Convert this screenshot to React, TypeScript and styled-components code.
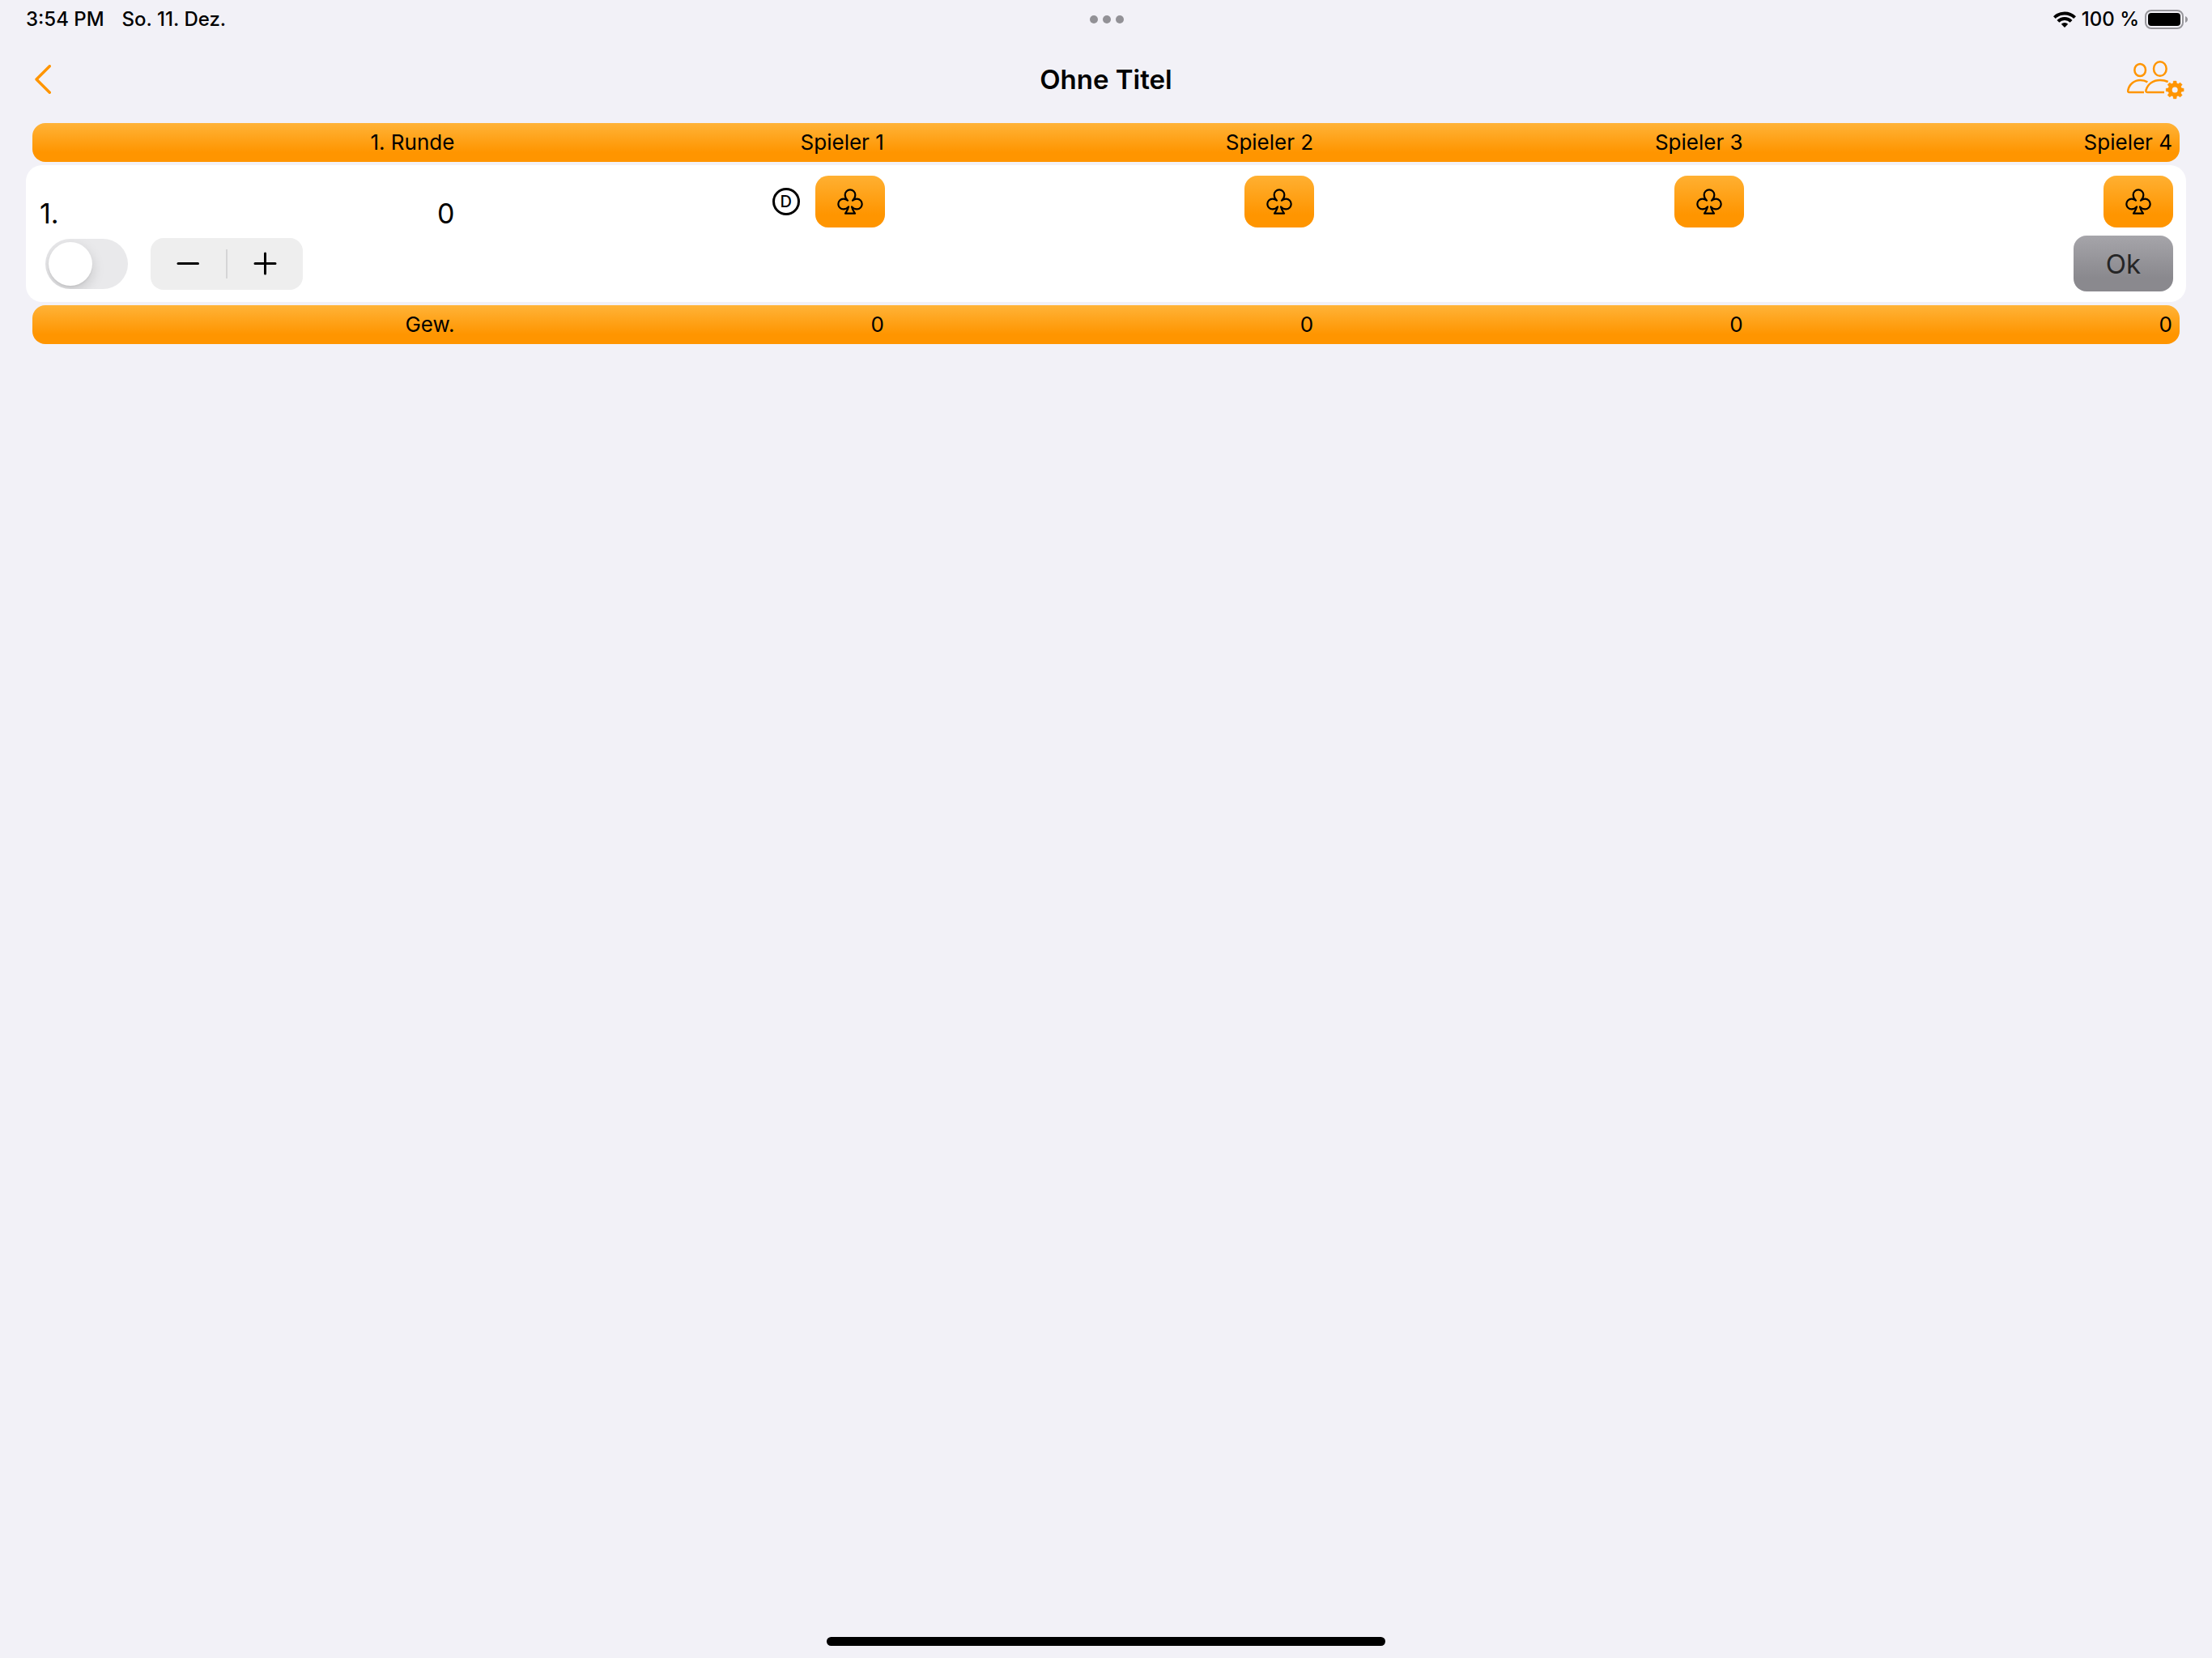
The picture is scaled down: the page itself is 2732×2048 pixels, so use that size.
import React, { useState } from "react";
import styled, { createGlobalStyle } from "styled-components";

const orange = "#ff9500";

const GlobalStyle = createGlobalStyle`
  *, *::before, *::after { box-sizing: border-box; }
  body {
    margin: 0;
    background: #f2f1f7;
    color: #000;
    font-family: Inter, "Liberation Sans", sans-serif;
  }
  button, input { font: inherit; color: inherit; margin: 0; padding: 0; border: 0; }
  svg { display: block; }
`;

const Page = styled.div`
  min-height: 100vh;
  display: flex;
  flex-direction: column;
`;

const StatusBar = styled.div`
  height: 48px;
  padding: 0 30px 0 32px;
  display: grid;
  grid-template-columns: 1fr auto 1fr;
  align-items: center;
  font-size: 24px;
  line-height: 28px;
  font-weight: 500;
`;

const StatusGroup = styled.div<{ $end?: boolean; $gap: number }>`
  display: flex;
  align-items: center;
  justify-content: ${(p) => (p.$end ? "flex-end" : "flex-start")};
  gap: ${(p) => p.$gap}px;
`;

const Dots = styled.button`
  display: flex;
  gap: 6px;
  background: none;
`;

const Dot = styled.span`
  width: 10px;
  height: 10px;
  border-radius: 50%;
  background: #929196;
`;

const NavBar = styled.header`
  height: 100px;
  padding: 0 32px;
  display: grid;
  grid-template-columns: 1fr auto 1fr;
  align-items: center;
`;

const Title = styled.h1`
  margin: 0;
  font-size: 33px;
  line-height: 40px;
  font-weight: 600;
`;

const NavButton = styled.button<{ $end?: boolean }>`
  justify-self: ${(p) => (p.$end ? "end" : "start")};
  padding: ${(p) => (p.$end ? "0 2px" : "0 11px")};
  background: none;
  color: ${orange};
`;

const ScoreTable = styled.table`
  display: flex;
  flex-direction: column;
  gap: 4px;
  margin: 4px 32px 0;
`;

const Head = styled.thead`
  display: block;
`;

const Foot = styled.tfoot`
  display: block;
`;

const Round = styled.tbody`
  display: flex;
  flex-direction: column;
  gap: 10px;
  padding: 13px 8px;
  border-radius: 20px;
  background: #fff;
`;

const Row = styled.tr`
  display: grid;
  grid-template-columns: repeat(5, 1fr);
`;

const BarRow = styled(Row)`
  height: 48px;
  margin: 0 8px;
  align-items: center;
  border-radius: 16px;
  background: linear-gradient(#ffb338, ${orange} 75%);
`;

const BarCell = styled.th`
  padding: 0 9px;
  font-size: 26px;
  line-height: 32px;
  font-weight: 400;
  text-align: right;
`;

const BarValue = styled(BarCell).attrs({ as: "td" })``;

const BidCell = styled.td`
  padding: 0 8px;
  display: flex;
  align-items: center;
  justify-content: flex-end;
  gap: 19px;
`;

const SumCell = styled(BidCell)`
  padding: 0 9px;
  align-items: flex-end;
  justify-content: space-between;
  font-size: 34px;
  line-height: 34px;
`;

const Dealer = styled.span`
  width: 34px;
  height: 34px;
  display: grid;
  place-items: center;
  border: 3px solid #000;
  border-radius: 50%;
  font-size: 20px;
  line-height: 20px;
  font-weight: 500;
`;

const SuitButton = styled.button`
  width: 86px;
  height: 64px;
  display: grid;
  place-items: center;
  border-radius: 16px;
  background: linear-gradient(#ffb032, ${orange} 75%);
`;

const ControlCell = styled.td`
  grid-column: 1 / -1;
  padding: 0 8px 0 16px;
  display: flex;
  align-items: center;
  gap: 28px;
`;

const Switch = styled.input`
  appearance: none;
  width: 102px;
  height: 62px;
  padding: 4px;
  border-radius: 31px;
  overflow: hidden;
  background: #e9e9eb;

  &::before {
    content: "";
    display: block;
    width: 54px;
    height: 54px;
    border-radius: 50%;
    background: #fff;
    box-shadow: 0 6px 16px rgba(0, 0, 0, 0.15), 0 2px 2px rgba(0, 0, 0, 0.05);
  }

  &:checked { background: #34c759; }
  &:checked::before { margin-left: 40px; }
`;

const Stepper = styled.div`
  width: 188px;
  height: 64px;
  display: flex;
  align-items: center;
  border-radius: 16px;
  background: #eee;
`;

const StepButton = styled.button`
  flex: 1;
  height: 64px;
  display: grid;
  place-items: center;
  background: none;
`;

const StepDivider = styled.span`
  width: 2px;
  height: 36px;
  background: #d5d5d6;
`;

const OkButton = styled.button`
  width: 123px;
  height: 69px;
  margin-left: auto;
  border-radius: 16px;
  background: linear-gradient(#a6a5aa, #8a898e 75%);
  color: #252526;
  font-size: 33px;
  line-height: 40px;
`;

const HomeIndicator = styled.div`
  width: 690px;
  max-width: 60%;
  height: 11px;
  margin: auto auto 15px;
  border-radius: 6px;
  background: #000;
`;

const ChevronIcon = () => (
  <svg width="20" height="36" viewBox="0 0 20 36" fill="none" stroke="currentColor" strokeWidth="3.400" strokeLinecap="round" strokeLinejoin="round">
    <path d="M18.300 1.700 2 18l16.300 16.300" />
  </svg>
);

const WifiIcon = () => (
  <svg width="28" height="20" viewBox="0 0 28 20" fill="none" stroke="#000" strokeWidth="4">
    <path d="M1.400 7.600a18 18 0 0 1 25.200 0" />
    <path d="M5.900 12.400a11.500 11.500 0 0 1 16.200 0" />
    <path d="M14 20l-4.200-4.200a6 6 0 0 1 8.400 0z" fill="#000" stroke="none" />
  </svg>
);

const BatteryIcon = () => (
  <svg width="53" height="24" viewBox="0 0 53 24">
    <rect x="1" y="1" width="46" height="22" rx="7" fill="none" stroke="#97969b" strokeWidth="2" />
    <rect x="4" y="4" width="40" height="16" rx="4" />
    <path d="M50 8c4 1.500 4 6.500 0 8z" fill="#97969b" />
  </svg>
);

const gearTeeth = [0, 45, 90, 135, 180, 225, 270, 315];

const PlayersIcon = () => (
  <svg width="72" height="49" viewBox="378 222 216 147" fill="none" stroke="currentColor" strokeWidth="7.500" strokeLinecap="butt" strokeLinejoin="round">
    <ellipse cx="429.500" cy="259.500" rx="20.500" ry="22.500" />
    <ellipse cx="503.500" cy="255" rx="23.500" ry="26.500" />
    <path d="M444 342h-54c-5 0-6-2-5-8 4-21 23-37 45-37 10 0 19 2 27 7" />
    <path d="M519 342h-62c-6 0-7-3-5-9 6-22 26-36 52-36 11 0 20 2 29 6" />
    <circle cx="558.500" cy="333" r="18" strokeWidth="15" />
    {gearTeeth.map((angle) => (
      <path key={angle} d="M551 312l2-12h11l2 12z" transform={`rotate(${angle} 558.5 333)`} fill="currentColor" strokeWidth="1" />
    ))}
  </svg>
);

const ClubIcon = () => (
  <svg width="32" height="32" viewBox="375 130 96 96" fill="none" stroke="#000" strokeWidth="6.500" strokeLinejoin="round">
    <path d="M414 174C407 167 404 160 404 153A19 19 0 0 1 442 153C442 160 439 167 432 174C437 170 442 168 448 168A19 19 0 0 1 448 206C440 206 434 203 429 197C431 208 436 214 441 222H405C410 214 415 208 417 197C412 203 406 206 398 206A19 19 0 0 1 398 168C404 168 409 170 414 174Z" />
  </svg>
);

const MinusIcon = () => (
  <svg width="30" height="30" viewBox="0 0 30 30" stroke="#000" strokeWidth="3" strokeLinecap="round">
    <path d="M2 14.500h24.500" />
  </svg>
);

const PlusIcon = () => (
  <svg width="30" height="30" viewBox="0 0 30 30" stroke="#000" strokeWidth="3" strokeLinecap="round">
    <path d="M2 14.500h25M14.500 2v25" />
  </svg>
);

const players = ["Spieler 1", "Spieler 2", "Spieler 3", "Spieler 4"];

export default function App() {
  const [total, setTotal] = useState(0);

  return (
    <>
      <GlobalStyle />
      <Page>
        <StatusBar>
          <StatusGroup $gap={22}>
            <span>3:54 PM</span>
            <span>So. 11. Dez.</span>
          </StatusGroup>
          <Dots aria-label="Multitasking">
            <Dot />
            <Dot />
            <Dot />
          </Dots>
          <StatusGroup $end $gap={7}>
            <WifiIcon />
            <span>100 %</span>
            <BatteryIcon />
          </StatusGroup>
        </StatusBar>
        <NavBar>
          <NavButton aria-label="Zurück">
            <ChevronIcon />
          </NavButton>
          <Title>Ohne Titel</Title>
          <NavButton $end aria-label="Spieler verwalten">
            <PlayersIcon />
          </NavButton>
        </NavBar>
        <ScoreTable>
          <Head>
            <BarRow>
              <BarCell scope="col">1. Runde</BarCell>
              {players.map((name) => (
                <BarCell key={name} scope="col">{name}</BarCell>
              ))}
            </BarRow>
          </Head>
          <Round>
            <Row>
              <SumCell>
                <span>1.</span>
                <span>{total}</span>
              </SumCell>
              {players.map((name, index) => (
                <BidCell key={name}>
                  {index === 0 && <Dealer>D</Dealer>}
                  <SuitButton aria-label={`Ansage ${name}`}>
                    <ClubIcon />
                  </SuitButton>
                </BidCell>
              ))}
            </Row>
            <Row>
              <ControlCell>
                <Switch type="checkbox" role="switch" aria-label="Runde werten" />
                <Stepper role="group" aria-label="Punkte">
                  <StepButton aria-label="Weniger" onClick={() => setTotal(Math.max(0, total - 1))}>
                    <MinusIcon />
                  </StepButton>
                  <StepDivider />
                  <StepButton aria-label="Mehr" onClick={() => setTotal(total + 1)}>
                    <PlusIcon />
                  </StepButton>
                </Stepper>
                <OkButton disabled>Ok</OkButton>
              </ControlCell>
            </Row>
          </Round>
          <Foot>
            <BarRow>
              <BarCell scope="row">Gew.</BarCell>
              {players.map((name) => (
                <BarValue key={name}>0</BarValue>
              ))}
            </BarRow>
          </Foot>
        </ScoreTable>
        <HomeIndicator />
      </Page>
    </>
  );
}
